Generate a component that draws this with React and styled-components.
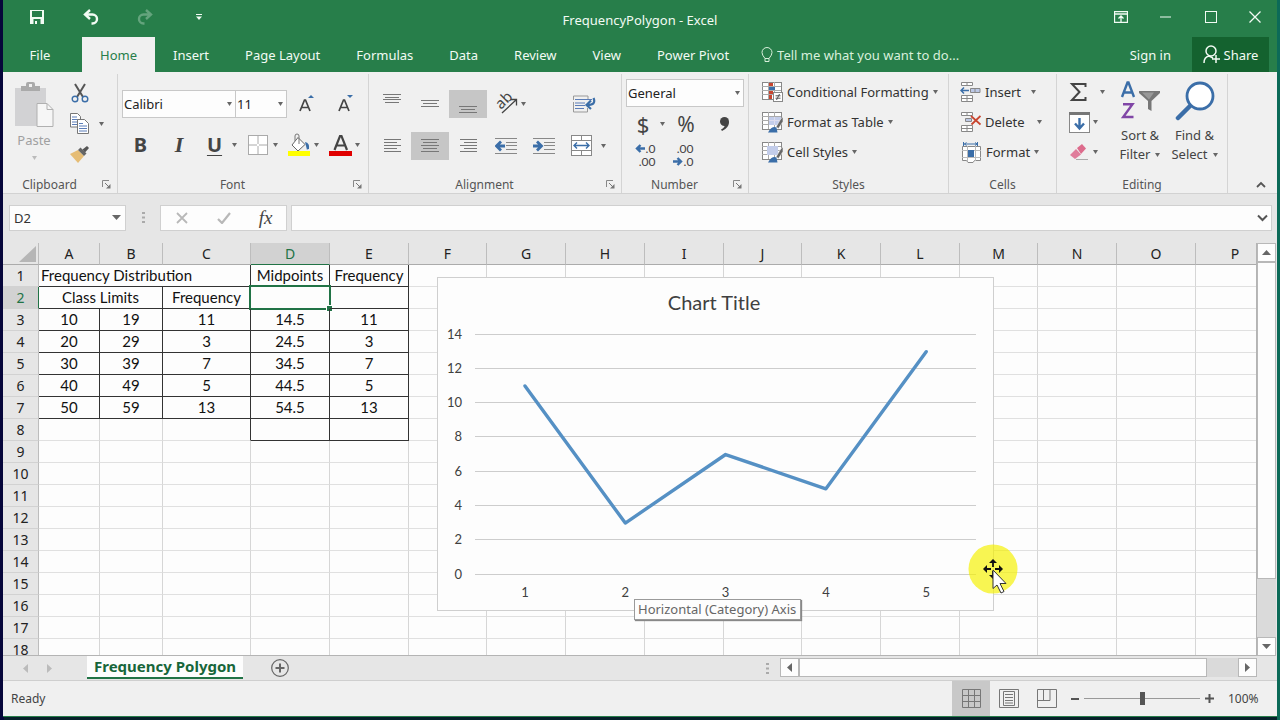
import React from "react";
import styled, { createGlobalStyle, css } from "styled-components";

const ui = `"Noto Sans", "Open Sans", sans-serif`;
const cellFont = `Lato, "Noto Sans", sans-serif`;
const green = "#277e4a";
const ink = "#444";
const blue = "#3b6ea8";

const Global = createGlobalStyle`
  * { box-sizing: border-box; }
  body { margin: 0; font-family: ${ui}; font-size: 13px; color: #333; overflow: hidden; }
  button, input, select { font: inherit; color: inherit; }
  button { background: none; border: 0; padding: 0; }
  svg { display: block; flex: none; }
`;

const Desktop = styled.div`
  height: 100vh;
  padding: 0 3px 3px;
  background: linear-gradient(90deg, #06063a 0 4px, #06202a 4px calc(100% - 3px), #0c6a58 calc(100% - 3px));
`;
const Window = styled.div`
  height: 100%;
  display: flex;
  flex-direction: column;
  background: #f0f0f0;
  border-bottom: 1px solid ${green};
`;

/* Title bar and tabs */
const TitleBar = styled.header`
  display: grid;
  grid-template-columns: 1fr auto 1fr;
  height: 37px;
  background: ${green};
  color: #f2fbf4;
`;
const BarSide = styled.div`
  display: flex;
  justify-content: ${(p) => (p.$end ? "flex-end" : "flex-start")};
  padding-left: ${(p) => (p.$end ? 0 : 7)}px;
`;
const BarButton = styled.button`
  width: ${(p) => p.$w}px;
  height: 33px;
  display: grid;
  place-items: center;
`;
const Title = styled.h1`
  margin: 0;
  font-size: 13px;
  font-weight: 400;
  line-height: 40px;
`;
const TabBar = styled.nav`
  display: flex;
  height: 35px;
  background: ${green};
  color: #f2fbf4;
  padding-right: 8px;
`;
const Tab = styled.button`
  padding: 0 18px;
  line-height: 36px;
  font-size: 13px;
  white-space: nowrap;
  ${(p) => p.$file && css`width: 79px; padding: 0 5px 0 0;`}
  ${(p) => p.$active && css`background: #f0f0f0; color: ${green};`}
`;
const TellMe = styled.label`
  flex: 1;
  display: flex;
  align-items: center;
  gap: 4px;
  padding-left: 14px;
  input {
    flex: 1;
    min-width: 0;
    border: 0;
    padding: 0;
    background: none;
    font-size: 13px;
    outline: 0;
  }
  input::placeholder { color: #d9f0dc; opacity: 1; }
`;
const SignIn = styled.a`
  color: inherit;
  text-decoration: none;
  line-height: 37px;
  padding-right: 21px;
`;
const Share = styled.button`
  display: flex;
  align-items: center;
  justify-content: center;
  gap: 4px;
  width: 77px;
  background: #14622f;
`;

/* Ribbon */
const Ribbon = styled.section`
  display: flex;
  height: 122px;
  padding-top: 2px;
  background: #f0f0f0;
  border-bottom: 1px solid #d2d2d2;
`;
const GroupBox = styled.div`
  width: ${(p) => p.$w}px;
  flex: none;
  display: flex;
  flex-direction: column;
  border-right: 1px solid #d4d4d4;
`;
const GroupBody = styled.div`
  flex: 1;
  min-height: 0;
  padding: ${(p) => p.$pad};
`;
const GroupFoot = styled.div`
  display: grid;
  grid-template-columns: ${(p) => (p.$launcher ? "1fr 21px" : "1fr")};
  align-items: center;
  justify-items: center;
  height: 17px;
  font-size: 12px;
  line-height: 17px;
  color: #555;
`;
const Collapse = styled.button`
  flex: 1;
  display: flex;
  align-items: flex-end;
  justify-content: flex-end;
  padding: 0 11px 5px 0;
`;
const Cols = styled.div`
  display: flex;
`;
const Stack = styled.div`
  display: flex;
  flex-direction: column;
  gap: ${(p) => p.$gap || 0}px;
`;
const BigButton = styled.button`
  width: ${(p) => p.$w}px;
  display: flex;
  flex-direction: column;
  align-items: center;
  font-size: 13px;
  line-height: 19px;
  white-space: nowrap;
  color: ${(p) => (p.$off ? "#a0a0a0" : "#444")};
  svg.big { margin: ${(p) => (p.$off ? "5px 0 4px" : "4px 0 5px")}; }
`;
const WithArrow = styled.span`
  display: flex;
  align-items: center;
  gap: 5px;
`;
const UnderArrow = styled.span`
  padding-top: 6px;
`;
const ToolRow = styled.div`
  display: flex;
  align-items: center;
  height: ${(p) => p.$h || 28}px;
`;
const Tool = styled.button`
  width: ${(p) => p.$w || 38}px;
  height: ${(p) => p.$h || 28}px;
  flex: none;
  display: grid;
  place-items: center;
  background: ${(p) => (p.$on ? "#c6c6c6" : "none")};
`;
const ArrowTool = styled.button`
  width: ${(p) => p.$w || 11}px;
  height: 28px;
  flex: none;
  display: grid;
  align-items: center;
  justify-items: start;
`;
const Glyph = styled.span`
  font-family: ${(p) => (p.$serif ? `"Liberation Serif", serif` : ui)};
  font-size: ${(p) => p.$size || 20}px;
  line-height: 24px;
  font-weight: ${(p) => (p.$bold ? 700 : 400)};
  font-style: ${(p) => (p.$italic ? "italic" : "normal")};
  text-decoration: ${(p) => (p.$under ? "underline" : "none")};
  text-underline-offset: 3px;
  text-decoration-thickness: 1px;
  color: ${ink};
`;
const Combo = styled.label`
  display: grid;
  align-items: center;
  width: ${(p) => p.$w}px;
  height: 28px;
  background: #fdfdfd;
  border: 1px solid #c8c8c8;
  margin-right: ${(p) => (p.$join ? -1 : 0)}px;
  select {
    grid-area: 1 / 1;
    appearance: none;
    width: 100%;
    border: 0;
    background: none;
    padding: 0 1px;
    color: #222;
    outline: 0;
  }
  svg { grid-area: 1 / 1; justify-self: end; margin-right: 3px; pointer-events: none; }
`;
const LineButton = styled.button`
  display: flex;
  align-items: center;
  gap: 4px;
  height: 30px;
  white-space: nowrap;
  color: #333;
`;
const Caption = styled.span`
  min-width: ${(p) => p.$min || 0}px;
  text-align: left;
`;
const Decimals = styled.span`
  display: grid;
  font-family: ${cellFont};
  font-size: 12px;
  line-height: 13px;
  color: #444;
  span { display: flex; align-items: center; justify-content: flex-end; gap: 1px; }
`;

/* Formula bar */
const FormulaBar = styled.div`
  display: flex;
  align-items: center;
  height: 49px;
  padding: 0 5px 2px 6px;
  background: #e6e6e6;
`;
const FieldBox = styled.div`
  display: flex;
  align-items: center;
  height: 26px;
  background: #fdfdfd;
  border: 1px solid #d0d0d0;
  ${(p) => (p.$w ? `width: ${p.$w}px;` : "flex: 1;")}
  padding: 0 ${(p) => p.$pad || 0}px;
  input {
    flex: 1;
    min-width: 0;
    border: 0;
    padding: 0;
    background: none;
    outline: 0;
  }
`;
const Dots = styled.span`
  width: ${(p) => p.$w}px;
  display: grid;
  place-items: center;
`;

/* Sheet */
const SheetArea = styled.main`
  flex: 1;
  min-height: 0;
  display: flex;
  background: #e6e6e6;
`;
const GridView = styled.div`
  position: relative;
  flex: 1;
  min-width: 0;
  overflow: hidden;
  background: #fdfdfd;
  border-right: 1px solid #b4b4b4;
  border-bottom: 1px solid #b4b4b4;
`;
const Table = styled.table`
  table-layout: fixed;
  width: 1272px;
  border-collapse: separate;
  border-spacing: 0;
  font-family: ${cellFont};
  font-size: 15px;
  color: #111;
`;
const HeadCell = styled.th`
  height: 22px;
  padding: 0;
  font-family: ${ui};
  font-size: 14px;
  font-weight: 400;
  line-height: 21px;
  background: ${(p) => (p.$on ? "#d2d2d2" : "#e6e6e6")};
  color: ${(p) => (p.$on ? "#217346" : "#222")};
  border-right: 1px solid #bdbdbd;
  border-bottom: 1px solid ${(p) => (p.$on && !p.$row ? "#217346" : p.$row ? "#d2d2d2" : "#ababab")};
  ${(p) => p.$row && p.$on && css`border-right-color: #217346;`}
  svg { margin: 0 2px 0 auto; }
`;
const Cell = styled.td`
  position: relative;
  height: 22px;
  padding: ${(p) => (p.$left ? "0 0 0 2px" : "0")};
  line-height: 21px;
  white-space: nowrap;
  text-align: ${(p) => (p.$left ? "left" : "center")};
  border-right: 1px solid ${(p) => (p.$r ? "#333" : "#d6d6d6")};
  border-bottom: 1px solid ${(p) => (p.$b ? "#333" : "#e0e0e0")};
`;
const Selection = styled.span`
  position: absolute;
  inset: -2px -2px -2px -2px;
  border: 2px solid #217346;
  &::after {
    content: "";
    position: absolute;
    right: -3px;
    bottom: -3px;
    width: 5px;
    height: 5px;
    background: #217346;
    outline: 1px solid #fff;
  }
`;
const ChartFrame = styled.figure`
  position: absolute;
  left: 434px;
  top: 34px;
  margin: 0;
  background: #fdfdfd;
  border: 1px solid #cfcfcf;
  text { font-family: ${cellFont}; fill: #404040; }
`;
const ChartTip = styled.div`
  position: absolute;
  left: 631px;
  top: 356px;
  height: 21px;
  padding: 0 4px 0 3px;
  line-height: 19px;
  color: #666;
  white-space: nowrap;
  background: #fdfdfd;
  border: 1px solid #9a9a9a;
  box-shadow: 1px 1px 1px #888;
`;
const Pointer = styled.div`
  position: absolute;
  left: 965px;
  top: 301px;
`;
const VBar = styled.div`
  width: 20px;
  display: flex;
  flex-direction: column;
  background: #e6e6e6;
`;
const BarEnd = styled.button`
  width: 19px;
  height: 19px;
  display: grid;
  place-items: center;
  background: #fdfdfd;
  border: 1px solid #b8b8b8;
`;
const Thumb = styled.div`
  flex: ${(p) => p.$grow};
  width: ${(p) => (p.$h ? "auto" : "19px")};
  background: ${(p) => (p.$track ? "#dadada" : "#fdfdfd")};
  border: 1px solid ${(p) => (p.$track ? "#dadada" : "#b8b8b8")};
`;

/* Sheet tabs */
const SheetTabs = styled.div`
  display: flex;
  height: 25px;
  background: #e6e6e6;
  border-bottom: 1px solid #cfcfcf;
`;
const TabNav = styled.div`
  display: flex;
  width: 84px;
  padding-left: 10px;
`;
const NavButton = styled.button`
  width: 24px;
  display: grid;
  place-items: center;
`;
const SheetTab = styled.button`
  height: 23px;
  padding: 0 7px;
  line-height: 21px;
  font-size: 15px;
  font-weight: 700;
  color: #17663a;
  background: #fdfdfd;
  border-bottom: 2px solid #217346;
`;
const AddSheet = styled.button`
  width: 74px;
  display: grid;
  place-items: center;
`;
const Spacer = styled.div`
  flex: 1;
`;
const HBar = styled.div`
  display: flex;
  width: 477px;
  margin-right: 20px;
  padding: 2px 0 3px;
`;

/* Status bar */
const StatusBar = styled.footer`
  display: flex;
  align-items: center;
  height: 35px;
  font-size: 12px;
  padding-left: 8px;
  color: #444;
`;
const ViewButton = styled.button`
  width: 38px;
  height: 35px;
  display: grid;
  place-items: center;
  background: ${(p) => (p.$on ? "#c8c8c8" : "none")};
`;
const ZoomStep = styled.button`
  width: 18px;
  height: 24px;
  display: grid;
  place-items: center;
`;
const Slider = styled.input`
  appearance: none;
  width: 116px;
  height: 14px;
  margin: 0;
  background: linear-gradient(#999, #999) center / 100% 1px no-repeat;
  &::-webkit-slider-thumb {
    appearance: none;
    width: 5px;
    height: 13px;
    background: #555;
  }
`;
const ZoomText = styled.output`
  width: 59px;
  padding-left: 10px;
`;

/* Icons */
const Icon = ({ w, h = w, children, ...rest }) => (
  <svg width={w} height={h} viewBox={`0 0 ${w} ${h}`} fill="none" aria-hidden="true" {...rest}>
    {children}
  </svg>
);
const Down = ({ c = "#666", w = 7 }) => (
  <Icon w={w} h={4}><path d={`M0 0h${w}L${w / 2} 4z`} fill={c} /></Icon>
);
const Lines = ({ rows, w = 22 }) => (
  <Icon w={w} h={20}>
    {rows.map(([y, a, b]) => <path key={y} d={`M${a} ${y + 0.5}H${b}`} stroke="#777" />)}
  </Icon>
);
const Launcher = () => (
  <Icon w={9}><path d="M.5 7V.5H7" stroke="#888" /><path d="M3 3l4 4" stroke="#777" /><path d="M8.500 4v4.500H4z" fill="#777" /></Icon>
);
const SaveIcon = () => (
  <Icon w={16}>
    <path fillRule="evenodd" fill="#f2fbf4" d="M1 1h14v14H1zM3 2v6h10V2zM4.500 10v5h1.500v-3h2v3h3.500v-5z" />
  </Icon>
);
const UndoIcon = ({ flip }) => (
  <Icon w={16} style={flip ? { transform: "scaleX(-1)" } : undefined} opacity={flip ? 0.3 : 1}>
    <path d="M7 1L2 5.500L7 10M2.500 5.500H9.500a4.500 4.500 0 0 1 0 9H8.500" stroke="#f2fbf4" strokeWidth="2.400" />
  </Icon>
);
const PasteIcon = () => (
  <Icon className="big" w={40} h={45}>
    <path d="M1 6h31v38H1z" fill="#d2d2d4" />
    <path d="M7 9V4h5V2q0-2 2-2h5q2 0 2 2v2h5v5z" fill="#aaa" /><rect x="15" y="2" width="3" height="3" fill="#f0f0f0" />
    <path d="M23 21.500h10l6 6v17H23z" fill="#f6f6f6" stroke="#b0b0b0" /><path d="M33 21.500v6h6" stroke="#b0b0b0" />
  </Icon>
);
const CutIcon = () => (
  <Icon w={18} h={20}>
    <path d="M4 1l8 13M14 1L6 14" stroke="#555" strokeWidth="2" />
    <circle cx="4" cy="16" r="2.800" stroke={blue} strokeWidth="1.400" /><circle cx="14" cy="16" r="2.800" stroke={blue} strokeWidth="1.400" />
  </Icon>
);
const CopyIcon = () => (
  <Icon w={19} h={21}>
    <path d="M.5.5h7l3 3V14h-10z" fill="#fff" stroke="#777" /><path d="M2 4h5M2 6.500h7M2 9h7M2 11.500h6" stroke="#5b7db8" />
    <path d="M7.500 6.500h7l4 4v10h-11z" fill="#fff" stroke="#777" /><path d="M9 10.500h4M9 13h8M9 15.500h8M9 18h8" stroke="#5b7db8" />
  </Icon>
);
const BrushIcon = () => (
  <Icon w={19} h={17}>
    <path d="M0 8l8-4 6 6-6 7z" fill="#e6bd75" /><path d="M8 4l2.500-2.500 6 6L14 10z" fill="#666" /><path d="M12.500 3.500L17 0l2 2-4 4.500z" fill="#555" />
  </Icon>
);
const GrowIcon = ({ shrink }) => (
  <Icon w={16} h={20}>
    <path d="M1 17L5.500 6h1L11 17M3 13.500h6" stroke={ink} strokeWidth="1.700" />
    <path d={shrink ? "M9 1h6l-3 3z" : "M9 4h6l-3-3z"} fill={blue} />
  </Icon>
);
const BordersIcon = () => (
  <Icon w={20}><rect x=".5" y=".5" width="19" height="19" fill="#fff" stroke="#aaa" /><path d="M10 1v18M1 10h18" stroke="#aaa" strokeDasharray="8 2" /></Icon>
);
const FillIcon = () => (
  <Icon w={22} h={24}>
    <path d="M10 4.500L17 11.500L10 18L4 12z" fill="#fff" stroke="#666" /><path d="M11 11V3q0-2-2-2T7 3v5" stroke="#777" />
    <path d="M17 9q5 1 4 7-2 0-2 1z" fill={blue} /><rect y="18" width="22" height="5" fill="#ff0" />
  </Icon>
);
const ColorIcon = () => (
  <Icon w={23} h={24}><path d="M5.500 17L11 3h1.500L18 17M8 12.500h7.500" stroke={ink} strokeWidth="2.200" /><rect y="18" width="23" height="5" fill="#e00000" /></Icon>
);
const OrientIcon = () => (
  <Icon w={30} h={26} overflow="visible">
    <text x="0" y="0" transform="translate(12 19) rotate(-45)" fontSize="15" fill={ink}>ab</text>
    <path d="M13 22L27 9M21.500 8.500H27.500V14.500" stroke={ink} strokeWidth="1.300" />
  </Icon>
);
const WrapIcon = () => (
  <Icon w={23} h={18}>
    <path d="M.5 5V1h14.500v3M.5 7v10h14v-4" stroke="#999" /><path d="M2 4.500h17M2 8h10M2 10.500h10M2 13.500h9" stroke="#5b7db8" />
    <path d="M20.500 3q3 7-6 7M18 5.500L13.500 10l4.500 4" stroke={blue} strokeWidth="2.200" />
  </Icon>
);
const IndentIcon = ({ right }) => (
  <Icon w={22} h={18}>
    <path d="M0 1.500h22M11 5.500h11M11 8.500h11M11 12.500h11M0 16.500h22" stroke="#888" />
    <path d={right ? "M0 9h8M4 4.500L8.500 9 4 13.500" : "M10 9H2M6 4.500L1.500 9 6 13.500"} stroke={blue} strokeWidth="2.800" />
  </Icon>
);
const MergeIcon = () => (
  <Icon w={22}>
    <rect x=".5" y=".5" width="20" height="20" fill="#fff" stroke="#888" /><path d="M0 5.500h21M0 15.500h21M10.500 0v5M10.500 16v5" stroke="#888" />
    <path d="M3 10.500h15M6 7.500l-3 3 3 3M15 7.500l3 3-3 3" stroke={blue} strokeWidth="1.400" />
  </Icon>
);
const SmallArrow = ({ right }) => (
  <Icon w={10} h={9}><path d={right ? "M0 4.500h8M4.500 1L8 4.500 4.500 8" : "M10 4.500H2M5.500 1L2 4.500 5.500 8"} stroke={blue} strokeWidth="2.400" /></Icon>
);
const GridBase = () => (
  <><rect x=".5" y=".5" width="19" height="17" fill="#fff" stroke="#888" /><path d="M0 4.500h19M0 8.500h19M0 12.500h19M6.500 0v17M12.500 0v17" stroke="#aaa" /></>
);
const CondIcon = () => (
  <Icon w={21} h={20}>
    <GridBase /><path d="M7 1h4v3H7zM7 9h4v3H7z" fill="#c8452f" /><path d="M7 5h6v3H7z" fill={blue} /><path d="M7 13h3v4H7z" fill="#c8452f" />
    <rect x="11.500" y="10.500" width="9" height="9" fill="#fff" stroke="#888" /><path d="M13.500 13.800h5M13.500 16.200h5M17.500 12l-3 6" stroke="#555" />
  </Icon>
);
const TableIcon = ({ cell }) => (
  <Icon w={21} h={21}>
    <GridBase /><path d={cell ? "M5 4h11v9H5z" : "M7 5h12v8H7z"} fill="#c3cdea" />
    {!cell && <path d="M7 8.500h12M12.500 5v8" stroke="#dde" />}
    <path d="M21 5q-2 1-3.500 4l-3.500 6 2.500 1.500 4.500-7z" fill="#666" stroke="#f0f0f0" strokeWidth=".6" /><path d="M6 20.500q4-7 8.500-5l1 5z" fill={blue} />
  </Icon>
);
const InsertIcon = ({ del }) => (
  <Icon w={21} h={20}>
    <path d="M1.500.5h11v3h-11zM7 .5v3M1.500 13.500h11v6h-11zM7 13v6M1.500 16.500h11" fill="#fff" stroke="#888" />
    {del ? (
      <><path d="M5.500 6.500h6v3h-6z" fill="#bcc8e6" stroke="#888" /><path d="M11 4l9.500 8.500M20.500 4l-9 8.500" stroke="#c8452f" strokeWidth="1.800" /></>
    ) : (
      <><path d="M10.500 6.500h9.500v4h-9.500zM15 6.500v4" fill="#bcc8e6" stroke="#888" /><path d="M9 8.500H1M4 5.500l-3 3 3 3" stroke={blue} strokeWidth="1.500" /></>
    )}
  </Icon>
);
const FormatIcon = () => (
  <Icon w={22} h={21}>
    <path d="M4 2h14M3.500 0v4M17.500 0v4M6.500.5l-2 1.500 2 1.500M15 .5l2 1.500-2 1.500" stroke={blue} />
    <path d="M2.500 4.500h18v14h-6l-1.500 2H8l-1.500-2h-4z" fill="#fff" stroke="#888" /><path d="M2 8.500h19M2 15.500h19M7.500 4v15M15.500 4v15" stroke="#bbb" /><rect x="8" y="8" width="6" height="7" fill={blue} />
  </Icon>
);
const SumIcon = () => (
  <Icon w={18} h={20}><path d="M16.500 5V2H3l7.500 8L3 18h13.500v-3" stroke={ink} strokeWidth="2" /></Icon>
);
const FillDownIcon = () => (
  <Icon w={21} h={21}><rect x=".5" y=".5" width="20" height="20" fill="#fff" stroke="#888" /><path d="M0 0h21v3H0z" fill="#777" /><path d="M10.500 6v10M6 11.500l4.500 5 4.500-5" stroke={blue} strokeWidth="2.400" /></Icon>
);
const EraserIcon = () => (
  <Icon w={20} h={17}><path d="M8 4l5-4 4 4.500L12 10z" fill="#dd6b8c" /><path d="M7 5l5 5.500L6 15 1 11z" fill="#e07d9b" /><path d="M7 15.500h12" stroke="#aaa" /></Icon>
);
const SortIcon = () => (
  <Icon className="big" w={40} h={40}>
    <path d="M2 16L7.500 1.500h1L14 16M4 11.500h8" stroke={blue} strokeWidth="2.400" /><path d="M3 23.200h9.500L3.200 36h10.300" stroke="#8046a6" strokeWidth="2.400" />
    <path d="M19 10h21v2L31.500 20v10l-3.500-2v-8L19 12z" fill="#777" /><path d="M22 11.500h12l-5 7z" fill="#999" />
  </Icon>
);
const FindIcon = () => (
  <Icon className="big" w={40} h={40}><path d="M15 25L3 37" stroke={blue} strokeWidth="4.500" strokeLinecap="round" /><circle cx="25" cy="15" r="13" fill="#fff" stroke={blue} strokeWidth="2.800" /></Icon>
);
const Triangle = ({ d, c = "#666" }) => (
  <Icon w={9}><path d={{ up: "M0 7h9L4.500 2z", down: "M0 2h9L4.500 7z", left: "M7 0v9L2 4.500z", right: "M2 0v9l5-4.500z" }[d]} fill={c} /></Icon>
);
const ThreeDots = () => (
  <Icon w={3} h={13}><path d="M0 1h3v2H0zM0 5.500h3v2H0zM0 10h3v2H0z" fill="#aaa" /></Icon>
);

const Group = ({ w, label, pad, launcher, children }) => (
  <GroupBox $w={w}>
    <GroupBody $pad={pad}>{children}</GroupBody>
    <GroupFoot $launcher={launcher}>
      <span>{label}</span>
      {launcher && <button aria-label={`${label} settings`}><Launcher /></button>}
    </GroupFoot>
  </GroupBox>
);

/* Sheet contents */
const columns = [
  ["A", 61], ["B", 63], ["C", 88], ["D", 79], ["E", 79], ["F", 78], ["G", 79], ["H", 79],
  ["I", 79], ["J", 78], ["K", 79], ["L", 79], ["M", 78], ["N", 79], ["O", 79], ["P", 79],
];
const data = [
  [10, 19, 11, 14.5, 11],
  [20, 29, 3, 24.5, 3],
  [30, 39, 7, 34.5, 7],
  [40, 49, 5, 44.5, 5],
  [50, 59, 13, 54.5, 13],
];
const blanks = (from) => columns.slice(from).map(([c]) => <Cell key={c} />);

const rowCells = (n) => {
  if (n === 1)
    return (
      <>
        <Cell colSpan={3} $left $r $b>Frequency Distribution</Cell>
        <Cell $r $b>Midpoints</Cell>
        <Cell $r $b>Frequency</Cell>
        {blanks(5)}
      </>
    );
  if (n === 2)
    return (
      <>
        <Cell colSpan={2} $r $b>Class Limits</Cell>
        <Cell $r $b>Frequency</Cell>
        <Cell $r $b><Selection /></Cell>
        <Cell $r $b />
        {blanks(5)}
      </>
    );
  if (n <= 7)
    return (
      <>
        {data[n - 3].map((v, i) => <Cell key={i} $r $b>{v}</Cell>)}
        {blanks(5)}
      </>
    );
  if (n === 8)
    return (
      <>
        <Cell /><Cell /><Cell $r /><Cell $r $b /><Cell $r $b />
        {blanks(5)}
      </>
    );
  return blanks(0);
};

const values = [11, 3, 7, 5, 13];
const px = (i) => 87 + i * 100.3;
const py = (v) => 296.5 - v * 17.14;
const Chart = () => (
  <ChartFrame>
    <svg width="555" height="332" role="img" aria-label="Line chart of frequency">
      <text x="276" y="32" fontSize="20" textAnchor="middle">Chart Title</text>
      {[0, 2, 4, 6, 8, 10, 12, 14].map((v) => (
        <g key={v}>
          <path d={`M37 ${Math.round(py(v)) - 0.5}H538`} stroke="#cdcdcd" />
          <text x="24" y={py(v) + 4} fontSize="13" textAnchor="end">{v}</text>
        </g>
      ))}
      <polyline points={values.map((v, i) => `${px(i)},${py(v)}`).join(" ")} fill="none" stroke="#5590c4" strokeWidth="3.400" strokeLinejoin="round" strokeLinecap="round" />
      {values.map((_, i) => <text key={i} x={px(i)} y="319" fontSize="13" textAnchor="middle">{i + 1}</text>)}
    </svg>
  </ChartFrame>
);

export default function App() {
  return (
    <Desktop>
      <Global />
      <Window>
        <TitleBar>
          <BarSide>
            <BarButton $w={54} aria-label="Save"><SaveIcon /></BarButton>
            <BarButton $w={54} aria-label="Undo"><UndoIcon /></BarButton>
            <BarButton $w={54} aria-label="Redo"><UndoIcon flip /></BarButton>
            <BarButton $w={54} aria-label="Customize toolbar">
              <Icon w={6} h={6}><path d="M0 .5h6" stroke="#f2fbf4" /><path d="M0 2.500h6L3 6z" fill="#f2fbf4" /></Icon>
            </BarButton>
          </BarSide>
          <Title>FrequencyPolygon - Excel</Title>
          <BarSide $end>
            <BarButton $w={45} aria-label="Ribbon display options">
              <Icon w={14} h={12}><path d="M.5.5h13v11H.5zM1 3h12M7 11V5.500M4.500 7.500L7 5l2.500 2.500" stroke="#f2fbf4" strokeWidth="1.300" /></Icon>
            </BarButton>
            <BarButton $w={45} aria-label="Minimize"><Icon w={11} h={2}><path d="M0 1h11" stroke="#f2fbf4" /></Icon></BarButton>
            <BarButton $w={45} aria-label="Maximize"><Icon w={12}><rect x=".5" y=".5" width="11" height="11" stroke="#f2fbf4" /></Icon></BarButton>
            <BarButton $w={44} aria-label="Close"><Icon w={12}><path d="M.5.5l11 11M11.500.5l-11 11" stroke="#f2fbf4" strokeWidth="1.300" /></Icon></BarButton>
          </BarSide>
        </TitleBar>
        <TabBar>
          <Tab $file>File</Tab>
          {["Home", "Insert", "Page Layout", "Formulas", "Data", "Review", "View", "Power Pivot"].map((t) => (
            <Tab key={t} $active={t === "Home"}>{t}</Tab>
          ))}
          <TellMe>
            <Icon w={12} h={16}><path d="M4 11.500Q1 8 1 5.500a5 5 0 0 1 10 0Q11 8 8 11.500v3H4zM4 11.500h4" stroke="#d9f0dc" /></Icon>
            <input aria-label="Tell me" placeholder="Tell me what you want to do..." />
          </TellMe>
          <SignIn href="#">Sign in</SignIn>
          <Share>
            <Icon w={17} h={19}><circle cx="8" cy="6" r="5" stroke="#f2fbf4" strokeWidth="1.500" /><path d="M1 18q0-6 5-7l4 2M13 10v8M9 14h8" stroke="#f2fbf4" strokeWidth="1.500" /></Icon>
            Share
          </Share>
        </TabBar>

        <Ribbon>
          <Group w={115} label="Clipboard" pad="3px 0 0" launcher>
            <Cols>
              <BigButton $w={62} $off>
                <PasteIcon />
                <span>Paste</span>
                <UnderArrow><Down c="#bbb" w={5} /></UnderArrow>
              </BigButton>
              <Stack>
                <Tool $w={29} $h={31} aria-label="Cut"><CutIcon /></Tool>
                <Tool $w={29} $h={31} aria-label="Copy"><CopyIcon /></Tool>
                <Tool $w={29} $h={31} aria-label="Format painter"><BrushIcon /></Tool>
              </Stack>
              <Stack>
                <Tool as="span" $w={14} $h={31} />
                <Tool $w={14} $h={31} aria-label="Copy options"><Down w={5} /></Tool>
              </Stack>
            </Cols>
          </Group>

          <Group w={251} label="Font" pad="16px 0 0 2px" launcher>
            <Stack $gap={13}>
              <Cols>
                <Tool as="span" $w={2} />
                <Combo $w={114} $join>
                  <select aria-label="Font name"><option>Calibri</option></select><Down w={5} />
                </Combo>
                <Combo $w={52}>
                  <select aria-label="Font size"><option>11</option></select><Down w={5} />
                </Combo>
                <Tool $w={40} aria-label="Grow font"><GrowIcon /></Tool>
                <Tool $w={38} aria-label="Shrink font"><GrowIcon shrink /></Tool>
              </Cols>
              <ToolRow>
                <Tool $w={41} aria-label="Bold"><Glyph $bold>B</Glyph></Tool>
                <Tool $w={36} aria-label="Italic"><Glyph $serif $italic $bold $size={22}>I</Glyph></Tool>
                <Tool $w={35} aria-label="Underline"><Glyph $under $bold>U</Glyph></Tool>
                <ArrowTool aria-label="Underline options"><Down w={5} /></ArrowTool>
                <Tool $w={30} aria-label="Borders"><BordersIcon /></Tool>
                <ArrowTool aria-label="Border options"><Down w={5} /></ArrowTool>
                <Tool $w={30} aria-label="Fill color"><FillIcon /></Tool>
                <ArrowTool aria-label="Fill options"><Down w={5} /></ArrowTool>
                <Tool $w={30} aria-label="Font color"><ColorIcon /></Tool>
                <ArrowTool aria-label="Font color options"><Down w={5} /></ArrowTool>
              </ToolRow>
            </Stack>
          </Group>

          <Group w={253} label="Alignment" pad="16px 0 0 4px" launcher>
            <Stack $gap={14}>
              <ToolRow>
                <Tool aria-label="Top align"><Lines rows={[[0, 2, 20], [3, 4, 18], [5, 2, 20], [8, 4, 18]]} /></Tool>
                <Tool aria-label="Middle align"><Lines rows={[[6, 2, 20], [9, 4, 18], [12, 2, 20]]} /></Tool>
                <Tool $on aria-label="Bottom align"><Lines rows={[[12, 2, 20], [15, 4, 18], [18, 2, 20]]} /></Tool>
                <Tool $w={34} aria-label="Orientation"><OrientIcon /></Tool>
                <ArrowTool $w={44} aria-label="Orientation options"><Down w={5} /></ArrowTool>
                <Tool $w={38} aria-label="Wrap text"><WrapIcon /></Tool>
              </ToolRow>
              <ToolRow>
                <Tool aria-label="Align left"><Lines rows={[[3, 3, 20], [6, 3, 16], [9, 3, 20], [12, 3, 16], [15, 3, 20]]} /></Tool>
                <Tool $on aria-label="Center"><Lines rows={[[3, 2, 20], [6, 4, 18], [9, 2, 20], [12, 4, 18], [15, 2, 20]]} /></Tool>
                <Tool aria-label="Align right"><Lines rows={[[3, 3, 20], [6, 7, 20], [9, 3, 20], [12, 7, 20], [15, 3, 20]]} /></Tool>
                <Tool aria-label="Decrease indent"><IndentIcon /></Tool>
                <Tool aria-label="Increase indent"><IndentIcon right /></Tool>
                <Tool aria-label="Merge and center"><MergeIcon /></Tool>
                <ArrowTool aria-label="Merge options"><Down w={5} /></ArrowTool>
              </ToolRow>
            </Stack>
          </Group>

          <Group w={127} label="Number" pad="5px 0 0 4px" launcher>
            <Combo $w={118}>
              <select aria-label="Number format"><option>General</option></select><Down w={5} />
            </Combo>
            <ToolRow $h={34}>
              <Tool $w={34} aria-label="Currency"><Glyph $size={22}>$</Glyph></Tool>
              <ArrowTool aria-label="Currency options"><Down w={5} /></ArrowTool>
              <Tool $w={30} aria-label="Percent"><Glyph $size={21}>%</Glyph></Tool>
              <Tool $w={46} aria-label="Comma style">
                <Icon w={9} h={14}><circle cx="4.500" cy="4.500" r="4.500" fill={ink} /><path d="M9 4.500Q9 11 2 14l-1-1.500Q5 10.500 5 7z" fill={ink} /></Icon>
              </Tool>
            </ToolRow>
            <ToolRow $h={28}>
              <Tool aria-label="Increase decimal"><Decimals><span><SmallArrow />.0</span><span>.00</span></Decimals></Tool>
              <Tool aria-label="Decrease decimal"><Decimals><span>.00</span><span><SmallArrow right />.0</span></Decimals></Tool>
            </ToolRow>
          </Group>

          <Group w={200} label="Styles" pad="3px 0 0 13px">
            <Stack>
              <LineButton><CondIcon />Conditional Formatting<Down w={5} /></LineButton>
              <LineButton><TableIcon />Format as Table<Down w={5} /></LineButton>
              <LineButton><TableIcon cell />Cell Styles<Down w={5} /></LineButton>
            </Stack>
          </Group>

          <Group w={108} label="Cells" pad="3px 0 0 11px">
            <Stack>
              <LineButton><InsertIcon /><Caption $min={42}>Insert</Caption><Down w={5} /></LineButton>
              <LineButton><InsertIcon del /><Caption $min={48}>Delete</Caption><Down w={5} /></LineButton>
              <LineButton><FormatIcon /><Caption>Format</Caption><Down w={5} /></LineButton>
            </Stack>
          </Group>

          <Group w={171} label="Editing" pad="3px 0 0 8px">
            <Cols>
              <Stack>
                <ToolRow $h={30}><Tool $w={26} aria-label="AutoSum"><SumIcon /></Tool><Tool $w={22} aria-label="AutoSum options"><Down w={5} /></Tool></ToolRow>
                <ToolRow $h={30}><Tool $w={28} aria-label="Fill"><FillDownIcon /></Tool><ArrowTool aria-label="Fill options"><Down w={5} /></ArrowTool></ToolRow>
                <ToolRow $h={30}><Tool $w={28} aria-label="Clear"><EraserIcon /></Tool><ArrowTool aria-label="Clear options"><Down w={5} /></ArrowTool></ToolRow>
              </Stack>
              <BigButton $w={54}>
                <SortIcon />
                <span>Sort &amp;</span>
                <WithArrow>Filter<Down w={5} /></WithArrow>
              </BigButton>
              <BigButton $w={55}>
                <FindIcon />
                <span>Find &amp;</span>
                <WithArrow>Select<Down w={5} /></WithArrow>
              </BigButton>
            </Cols>
          </Group>
          <Collapse aria-label="Collapse ribbon"><Icon w={10} h={7}><path d="M1 6l4-4 4 4" stroke="#555" strokeWidth="1.800" /></Icon></Collapse>
        </Ribbon>

        <FormulaBar>
          <FieldBox $w={117} $pad={4}>
            <input aria-label="Name box" defaultValue="D2" />
            <Triangle d="down" />
          </FieldBox>
          <Dots $w={34}><ThreeDots /></Dots>
          <FieldBox $w={127}>
            <Tool $w={42} $h={24} aria-label="Cancel"><Icon w={12}><path d="M1 1l10 10M11 1L1 11" stroke="#b8b8b8" strokeWidth="1.800" /></Icon></Tool>
            <Tool $w={42} $h={24} aria-label="Enter"><Icon w={14} h={12}><path d="M1 7l4 4 8-10" stroke="#b8b8b8" strokeWidth="2.200" /></Icon></Tool>
            <Tool $w={41} $h={24} aria-label="Insert function"><Glyph $serif $italic $size={19}>fx</Glyph></Tool>
          </FieldBox>
          <Dots $w={4} />
          <FieldBox $pad={3}>
            <input aria-label="Formula" />
            <Icon w={11} h={8}><path d="M1 1.500l4.500 4.500L10 1.500" stroke="#555" strokeWidth="2" /></Icon>
          </FieldBox>
        </FormulaBar>

        <SheetArea>
          <GridView>
            <Table>
              <colgroup>
                <col style={{ width: 36 }} />
                {columns.map(([c, w]) => <col key={c} style={{ width: w }} />)}
              </colgroup>
              <thead>
                <tr>
                  <HeadCell aria-label="Select all"><Icon w={17} h={16}><path d="M17 0v16H0z" fill="#b6b6b6" /></Icon></HeadCell>
                  {columns.map(([c]) => <HeadCell key={c} $on={c === "D"}>{c}</HeadCell>)}
                </tr>
              </thead>
              <tbody>
                {Array.from({ length: 18 }, (_, i) => i + 1).map((n) => (
                  <tr key={n}>
                    <HeadCell $row $on={n === 2}>{n}</HeadCell>
                    {rowCells(n)}
                  </tr>
                ))}
              </tbody>
            </Table>
            <Chart />
            <ChartTip role="tooltip">Horizontal (Category) Axis</ChartTip>
            <Pointer>
              <Icon w={50}>
                <circle cx="25" cy="25" r="24.500" fill="#f5f000" fillOpacity=".68" />
                <path d="M18 25h5M27 25h5M25 18v5M25 27v5" stroke="#111" strokeWidth="1.800" />
                <path d="M25 15l4 4h-8zM25 35l4-4h-8zM15 25l4-4v8zM35 25l-4-4v8z" fill="#111" />
                <path d="M25 26v18.500l4-3.500 4 8 3-1.500-4-8h6z" fill="#fff" stroke="#333" />
              </Icon>
            </Pointer>
          </GridView>
          <VBar>
            <BarEnd aria-label="Scroll up"><Triangle d="up" /></BarEnd>
            <Thumb $grow={318} />
            <Thumb $grow={57} $track />
            <BarEnd aria-label="Scroll down"><Triangle d="down" /></BarEnd>
          </VBar>
        </SheetArea>

        <SheetTabs>
          <TabNav>
            <NavButton aria-label="Previous sheet"><Triangle d="left" c="#bbb" /></NavButton>
            <NavButton aria-label="Next sheet"><Triangle d="right" c="#bbb" /></NavButton>
          </TabNav>
          <SheetTab>Frequency Polygon</SheetTab>
          <AddSheet aria-label="New sheet">
            <Icon w={18}><circle cx="9" cy="9" r="8.300" stroke="#666" strokeWidth="1.200" /><path d="M9 4.500v9M4.500 9h9" stroke="#666" strokeWidth="2" /></Icon>
          </AddSheet>
          <Spacer />
          <Dots $w={26}><ThreeDots /></Dots>
          <HBar>
            <BarEnd aria-label="Scroll left"><Triangle d="left" /></BarEnd>
            <Thumb $h $grow={409} />
            <Thumb $h $grow={29} $track />
            <BarEnd aria-label="Scroll right"><Triangle d="right" /></BarEnd>
          </HBar>
        </SheetTabs>

        <StatusBar>
          <span>Ready</span>
          <Spacer />
          <ViewButton $on aria-label="Normal view"><Icon w={19}><path d="M.5.5h18v18H.5zM6.500 0v19M12.500 0v19M0 6.500h19M0 12.500h19" stroke="#777" /></Icon></ViewButton>
          <ViewButton aria-label="Page layout view"><Icon w={20} h={19}><path d="M.5.5h19v18H.5zM4.500 2.500h11v14h-11zM6 5.500h8M6 8.500h8M6 11.500h8M6 14h8" stroke="#777" /></Icon></ViewButton>
          <ViewButton aria-label="Page break view"><Icon w={20} h={19}><path d="M.5.5h19v18H.5zM0 11.500h13V0M6.500 0v11" stroke="#777" /></Icon></ViewButton>
          <ZoomStep aria-label="Zoom out"><Icon w={8}><path d="M0 4h8" stroke="#555" strokeWidth="2" /></Icon></ZoomStep>
          <Slider type="range" aria-label="Zoom" min="0" max="100" defaultValue="50" />
          <ZoomStep aria-label="Zoom in"><Icon w={9}><path d="M0 4.500h9M4.500 0v9" stroke="#555" strokeWidth="2" /></Icon></ZoomStep>
          <ZoomText>100%</ZoomText>
        </StatusBar>
      </Window>
    </Desktop>
  );
}
